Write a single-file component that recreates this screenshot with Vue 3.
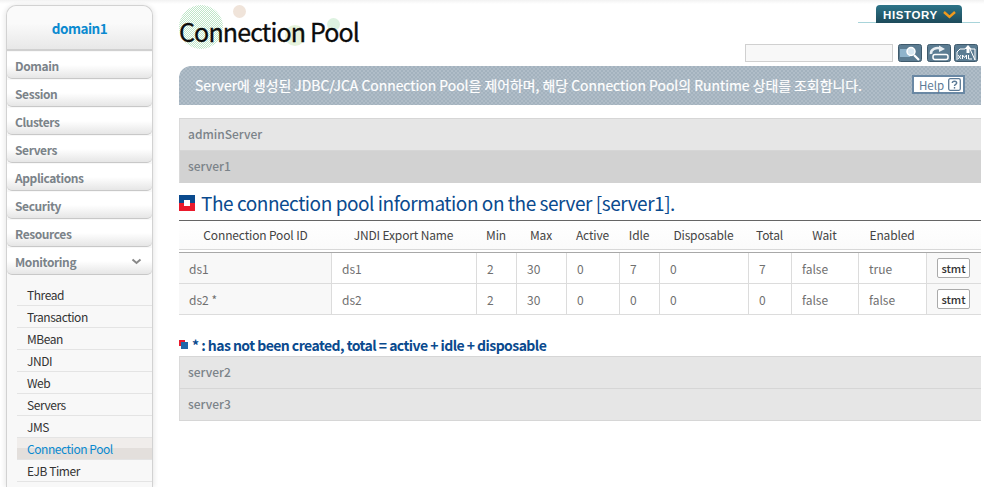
<script setup>
const menus = ['Domain', 'Session', 'Clusters', 'Servers', 'Applications', 'Security', 'Resources']
const subs = ['Thread', 'Transaction', 'MBean', 'JNDI', 'Web', 'Servers', 'JMS', 'Connection Pool', 'EJB Timer']
const heads = ['Connection Pool ID', 'JNDI Export Name', 'Min', 'Max', 'Active', 'Idle', 'Disposable', 'Total', 'Wait', 'Enabled', '']
const rows = [
  ['ds1', 'ds1', '2', '30', '0', '7', '0', '7', 'false', 'true'],
  ['ds2 *', 'ds2', '2', '30', '0', '0', '0', '0', 'false', 'false'],
]
</script>

<template>
  <div class="page">
    <aside class="side">
      <div class="brand">domain1</div>
      <div v-for="m in menus" :key="m" class="menu">{{ m }}</div>
      <div class="menu open">
        <span>Monitoring</span>
        <svg width="11" height="7" viewBox="0 0 11 7"><path d="M1.5 1.5 5.5 5 9.5 1.5" fill="none" stroke="#888" stroke-width="2"/></svg>
      </div>
      <ul class="subs">
        <li v-for="s in subs" :key="s" :class="{ on: s === 'Connection Pool' }">{{ s }}</li>
      </ul>
    </aside>

    <main class="main">
      <header class="top">
        <i class="dot d1"></i><i class="dot d2"></i><i class="dot d3"></i><i class="dot d4"></i>
        <h1>Connection Pool</h1>
        <div class="tools">
          <div class="hist">
            <span class="tab">HISTORY
              <svg width="13" height="8" viewBox="0 0 13 8"><path d="M1 1 6.500 6 12 1" fill="none" stroke="#f09a1c" stroke-width="2.400"/></svg>
            </span>
          </div>
          <div class="search">
            <div class="field"></div>
            <svg class="ico first" width="24" height="18" viewBox="0 0 24 18">
              <rect x=".5" y=".5" width="23" height="17" rx="2" fill="#5b7c92" stroke="#3f5a6c"/>
              <rect x="2" y="5" width="10" height="8" fill="#8fb4cc"/>
              <circle cx="13" cy="7.500" r="4" fill="#d8e8f2" stroke="#fff" stroke-width="1.500"/>
              <path d="M16 11 21 16" stroke="#fff" stroke-width="2.200"/>
            </svg>
            <svg class="ico second" width="24" height="18" viewBox="0 0 24 18">
              <rect x=".5" y=".5" width="23" height="17" rx="2" fill="#5b7c92" stroke="#3f5a6c"/>
              <path d="M4 10C3.500 5 9 3 14 4.500" fill="none" stroke="#e8eef2" stroke-width="2.600"/>
              <path d="M12 1.500 18 5 12 8Z" fill="#e8eef2"/>
              <rect x="6" y="10.500" width="15" height="5" rx="2" fill="#5b7c92" stroke="#fff" stroke-width="1.500"/>
            </svg>
            <svg class="ico" width="24" height="18" viewBox="0 0 24 18">
              <rect x=".5" y=".5" width="23" height="17" rx="2" fill="#5b7c92" stroke="#3f5a6c"/>
              <path d="M3 16V8L6 5H11M16 5H21V16Z" fill="none" stroke="#fff"/>
              <path d="M14 1 17.500 5H15.500V9H12.500V5H10.500Z" fill="#fff"/>
              <path d="M4 11 7 15M7 11 4 15M8.500 15V11L10.500 13.500 12.500 11V15M14.500 11V15H18" fill="none" stroke="#fff"/>
            </svg>
          </div>
        </div>
      </header>

      <div class="banner">
        <p>Server에 생성된 JDBC/JCA Connection Pool을 제어하며, 해당 Connection Pool의 Runtime 상태를 조회합니다.</p>
        <button class="help">Help
          <svg width="13" height="13" viewBox="0 0 13 13"><rect x=".7" y=".7" width="11.600" height="11.600" rx="1.500" fill="none" stroke="#5c7a96" stroke-width="1.300"/><path d="M4.300 5C4.300 2.600 8.700 2.600 8.700 5C8.700 6.500 6.500 6.300 6.500 8" fill="none" stroke="#5c7a96" stroke-width="1.400"/><rect x="5.800" y="9" width="1.400" height="1.600" fill="#5c7a96"/></svg>
        </button>
      </div>

      <div class="srv first">adminServer</div>
      <div class="srv cur">server1</div>

      <h2 class="title">
        <svg width="16" height="16" viewBox="0 0 16 16"><rect width="16" height="16" fill="#0a4a8e"/><rect y="8" width="16" height="8" fill="#ea1a2c"/><rect x="5" y="5" width="6" height="6" fill="#fff"/></svg>
        The connection pool information on the server [server1].
      </h2>

      <table>
        <colgroup>
          <col v-for="(w, i) in [153, 145, 40, 50, 53, 40, 89, 43, 67, 68, 54]" :key="i" :style="{ width: w + 'px' }">
        </colgroup>
        <thead>
          <tr><th v-for="(h, i) in heads" :key="i">{{ h }}</th></tr>
        </thead>
        <tbody>
          <tr v-for="r in rows" :key="r[0]">
            <td v-for="(c, i) in r" :key="i">{{ c }}</td>
            <td class="act"><button class="stmt">stmt</button></td>
          </tr>
        </tbody>
      </table>

      <p class="note">
        <svg width="9" height="9" viewBox="0 0 9 9"><rect width="6" height="6" fill="#ea1a2c"/><rect x="2" y="2" width="7" height="7" fill="#1f66a8"/></svg>
        <b>* : has not been created, total = active + idle + disposable</b>
      </p>
      <div class="srv first">server2</div>
      <div class="srv">server3</div>
    </main>
  </div>
</template>

<style scoped>
.page {
  display: flex;
  width: 984px;
  height: 487px;
  overflow: hidden;
  font-family: "Noto Sans CJK KR", "Open Sans", sans-serif;
  background: linear-gradient(#f2f2f2, #fff 4px);
  box-sizing: border-box;
  color: #666;
}
.side {
  width: 147px;
  margin: 5px 26px 0 6px;
  background: #f8f8f8;
  border: 1px solid #d2d2d2;
  border-bottom: 0;
  border-radius: 10px 10px 0 0;
  box-shadow: -2px 0 4px #eee, 2px 0 4px #eee;
  flex: none;
  box-sizing: border-box;
}
.brand {
  height: 43px;
  line-height: 45px;
  text-align: center;
  font-size: 13.5px;
  letter-spacing: -.5px;
  font-weight: 700;
  color: #0a8ad0;
  background: linear-gradient(#fafafa, #fafafa 40%, #e8e8e8);
  border-bottom: 2px solid #d0d0d0;
  border-radius: 10px 10px 0 0;
  margin-bottom: 1px;
}
.menu {
  height: 27px;
  margin-bottom: 1px;
  padding: 0 10px 0 8px;
  box-sizing: border-box;
  line-height: 27px;
  font-size: 12px;
  letter-spacing: -.4px;
  font-weight: 700;
  color: #7b8389;
  background: linear-gradient(#fff 50%, #e6e6e6);
  border-bottom: 1px solid #c8c8c8;
  border-radius: 0 0 5px 5px;
}
.open {
  display: flex;
  justify-content: space-between;
  align-items: center;
}
.subs {
  list-style: none;
  margin: 9px 0 0 10px;
  padding: 0;
}
.subs li {
  height: 22px;
  box-sizing: border-box;
  padding-left: 10px;
  line-height: 21px;
  font-size: 12px;
  letter-spacing: -.45px;
  color: #333;
  border-bottom: 1px solid #e4e4e4;
}
.subs li.on {
  color: #0a8ad0;
  background: linear-gradient(#f0edeb 50%, #e3dfdc 50%);
}
.main {
  width: 802px;
  flex: none;
}
.top {
  position: relative;
  height: 66px;
  box-sizing: border-box;
  padding-top: 13px;
}
.dot {
  position: absolute;
  border-radius: 50%;
}
.d1 { left: 0; top: 5px; width: 44px; height: 44px; background: repeating-conic-gradient(#bfe6c8 0 25%, #fff 0 50%) 0 0 / 2px 2px; }
.d2 { left: 54px; top: 5px; width: 13px; height: 13px; background: #f0e4da; }
.d3 { left: 106px; top: 25px; width: 20px; height: 21px; background: #e6f3dc; }
.d4 { left: 148px; top: 18px; width: 13px; height: 13px; background: #ddf2e0; }
h1 {
  position: relative;
  margin: 0;
  font-size: 25px;
  letter-spacing: -.85px;
  line-height: 36px;
  font-weight: 400;
  color: #0c0c0c;
  -webkit-text-stroke: .3px #0c0c0c;
}
.tools {
  position: absolute;
  right: 0;
  top: 0;
}
.hist {
  position: relative;
  height: 17px;
  width: 122px;
  margin: 5px 1px 0 auto;
  border-bottom: 1px solid #a8d4da;
}
.tab {
  position: absolute;
  left: 18px;
  top: 0;
  width: 86px;
  height: 18px;
  box-sizing: border-box;
  border-radius: 4px 4px 0 0;
  background: linear-gradient(#2d7488, #1d4a5a);
  color: #fff;
  font-size: 11.5px;
  font-weight: 700;
  letter-spacing: .6px;
  white-space: nowrap;
  padding-left: 7px;
  line-height: 20px;
  font-family: "Liberation Sans", sans-serif;
}
.tab svg { margin-left: 2px; }
.search {
  display: flex;
  justify-content: flex-end;
  align-items: center;
  margin: 21px 3px 0 0;
  gap: 3px;
}
.field {
  width: 148px;
  height: 18px;
  box-sizing: border-box;
  background: #f8f8f8;
  border: 1px solid #d0d0d0;
  margin-right: 2px;
}
.ico.first { margin-right: 2px; }
.banner {
  height: 39px;
  width: 802px;
  box-sizing: border-box;
  display: flex;
  align-items: center;
  justify-content: space-between;
  padding: 0 16px 2px 16px;
  border-top-left-radius: 12px;
  background: repeating-conic-gradient(#a3b2be 0 25%, #b0bdc8 0 50%) 0 0 / 4px 4px;
  margin-bottom: 13px;
}
.banner p {
  margin: 0;
  font-size: 13.9px;
  color: #fff;
  -webkit-text-stroke: .2px #fff;
  white-space: nowrap;
}
.help {
  width: 53px;
  height: 19px;
  display: flex;
  align-items: center;
  gap: 4px;
  padding: 0 0 0 5px;
  box-sizing: border-box;
  background: #fff;
  border: 2px solid #6a88a4;
  font: 400 11.5px "Noto Sans CJK KR", sans-serif;
  color: #5c7a96;
}
.help svg { flex: none; }
.srv {
  height: 32px;
  line-height: 30px;
  padding-left: 8px;
  box-sizing: border-box;
  font-size: 12px;
  font-weight: 500;
  color: #7b8389;
  background: #e6e6e6;
  border-bottom: 1px solid #d6d6d6;
  border-left: 1px solid #dadada;
}
.srv.first { border-top: 1px solid #d6d6d6; height: 33px; }
.srv.cur { background: #d2d2d2; border-bottom-color: #d2d2d2; }
.title {
  display: flex;
  align-items: center;
  gap: 6px;
  margin: 0;
  height: 38px;
  padding-top: 2px;
  font-size: 19px;
  letter-spacing: -.45px;
  line-height: 36px;
  font-weight: 400;
  color: #0a4a8e;
  border-bottom: 1px solid #666;
  box-sizing: border-box;
}
table {
  width: 802px;
  border-collapse: separate;
  border-spacing: 0;
  table-layout: fixed;
  font-size: 12px;
}
th {
  height: 32px;
  padding: 0 2px 5px 0;
  box-sizing: border-box;
  font-weight: 400;
  letter-spacing: -.15px;
  color: #444;
  border-bottom: 1px solid #a8a8a8;
  background: linear-gradient(#fff, #fafafa);
  box-shadow: inset 0 -2px 0 #fff, inset 0 -3px 0 #d8d8d8;
}
th:first-child { padding-right: 0; }
td {
  height: 31px;
  padding: 0 0 0 10px;
  box-sizing: border-box;
  color: #707070;
  border-right: 1px solid #dcdcdc;
  border-bottom: 1px solid #dcdcdc;
}
td:first-child, td.act { background: #f8f8f8; }
td:last-child { border-right: 0; }
.stmt {
  display: block;
  width: 33px;
  height: 20px;
  padding: 0;
  background: #fff;
  border: 1px solid #aaa;
  border-radius: 2px;
  font: 500 11px "Noto Sans CJK KR", sans-serif;
  color: #333;
}
.note {
  display: flex;
  align-items: center;
  gap: 4px;
  margin: 19px 0 1px;
  height: 21px;
  font-size: 14px;
  color: #0a4a8e;
  letter-spacing: -.55px;
}
</style>
